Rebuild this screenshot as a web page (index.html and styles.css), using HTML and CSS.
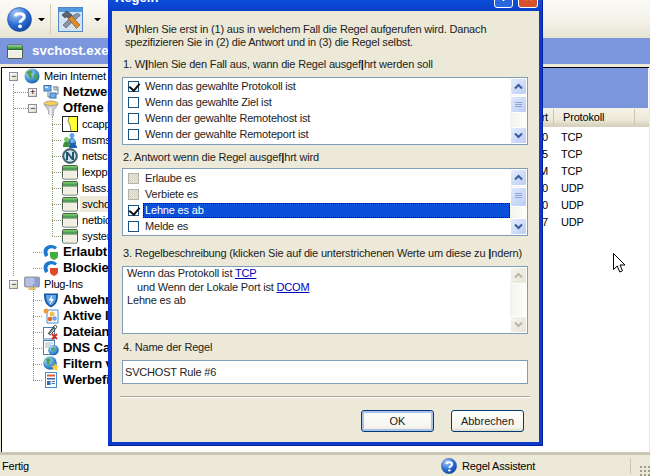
FILE: index.html
```html
<!DOCTYPE html>
<html lang="de">
<head>
<meta charset="utf-8">
<title>Regeln</title>
<link rel="stylesheet" href="styles.css">
</head>
<body>
<svg class="defs" width="0" height="0" aria-hidden="true">
  <defs>
    <linearGradient id="gw" x1="0" y1="0" x2="0" y2="1"><stop offset="0" stop-color="#8fd17c"/><stop offset="1" stop-color="#2f8f3a"/></linearGradient>
    <radialGradient id="gglobe" cx=".35" cy=".3" r=".8"><stop offset="0" stop-color="#bfe3fb"/><stop offset=".6" stop-color="#3d8fd6"/><stop offset="1" stop-color="#17509f"/></radialGradient>
    <radialGradient id="ghelp" cx=".35" cy=".25" r=".85"><stop offset="0" stop-color="#a9cdf7"/><stop offset=".55" stop-color="#2d6fd6"/><stop offset="1" stop-color="#123f9e"/></radialGradient>
    <symbol id="i-win" viewBox="0 0 16 16">
      <rect x=".5" y="1.5" width="15" height="13.5" rx="1.5" fill="#fff" stroke="#47604a"/>
      <rect x="1" y="2" width="14" height="3.5" fill="url(#gw)"/>
      <rect x="1" y="5.5" width="14" height="1" fill="#2a6a30"/>
      <rect x="1.5" y="7" width="13" height="7.5" fill="#f1efe2"/>
    </symbol>
    <symbol id="i-globe" viewBox="0 0 16 16">
      <circle cx="8" cy="8" r="7.5" fill="url(#gglobe)"/>
      <path d="M3 3.5 7 2l2 2-2 2 1 2-1 3-2-2-1-3-2-1zM10 7l3.500-1 1 3-2.500 3.500-1.500-1.500z" fill="#4fa24a"/>
    </symbol>
    <symbol id="i-net" viewBox="0 0 16 16">
      <path d="M10 3h5v7h-3" fill="none" stroke="#6b7f92"/>
      <path d="M5 8v5h6" fill="none" stroke="#6b7f92"/>
      <rect x="1" y="1.500" width="7" height="5.500" fill="#6ab0ea" stroke="#3f6ea8"/>
      <rect x="2" y="2.500" width="3" height="1.500" fill="#d8eeff"/>
      <rect x="7" y="9" width="6" height="5" fill="#6ab0ea" stroke="#3f6ea8"/>
      <rect x="11" y="3" width="3" height="3" fill="#cfd6dd" stroke="#8a97a5"/>
    </symbol>
    <symbol id="i-funnel" viewBox="0 0 16 16">
      <ellipse cx="8" cy="3.500" rx="7" ry="2.500" fill="#f7cf4b" stroke="#a9a9a9"/>
      <path d="M1 4c1 3 4 5 4.500 7v3l5 1.500V11C11 9 14 7 15 4c-2 2-12 2-14 0z" fill="#c9ccd2" stroke="#8b8e96" stroke-width=".6"/>
      <path d="M6.500 7.500v7l2 .7v-7.500z" fill="#f0f1f3"/>
    </symbol>
    <symbol id="i-yellow" viewBox="0 0 16 16">
      <rect x=".5" y=".5" width="15" height="15" fill="#ffff33" stroke="#222"/>
      <path d="M1 1h6L6 5l2 4 1 6H1z" fill="#fff"/>
      <path d="M7 1 6 5l2 4 1 6" fill="none" stroke="#8a8a50"/>
    </symbol>
    <symbol id="i-people" viewBox="0 0 16 16">
      <circle cx="10" cy="3.500" r="2.500" fill="#5fa7e0"/>
      <path d="M6 12c0-4 2-6 4-6s4 2 4 6z" fill="#2d6ab8"/>
      <circle cx="4.500" cy="7.500" r="2.500" fill="#7dc86d"/>
      <path d="M1 15c0-4 1.500-5.500 3.500-5.500S8 11 8 15z" fill="#3e8f3c"/>
      <circle cx="10.500" cy="9" r="2.300" fill="#6fb7ea"/>
      <path d="M7 16c0-3.500 1.500-5 3.500-5s4.500 1.500 4.500 5z" fill="#1f5fb0"/>
    </symbol>
    <symbol id="i-ns" viewBox="0 0 16 16">
      <circle cx="8" cy="8" r="7.500" fill="#2f5f6e" stroke="#6d7d85"/>
      <circle cx="8" cy="8" r="5.800" fill="#d7e4e6"/>
      <path d="M4 12V4h2l4 5V4h2v8h-2L6 7v5z" fill="#19586e"/>
    </symbol>
    <symbol id="i-allow" viewBox="0 0 16 16">
      <path d="M14 3.500C12 .5 6 0 2.500 3 -.5 6 .5 11 2.500 13l3-2C4 9 4 6.500 6 5s5-.5 6 .5z" fill="#1c78d0"/>
      <path d="M7 8h8v4c0 2-2 3-4 4-2-1-4-2-4-4z" fill="#3fae3a"/>
    </symbol>
    <symbol id="i-block" viewBox="0 0 16 16">
      <path d="M14 3.500C12 .5 6 0 2.500 3 -.5 6 .5 11 2.500 13l3-2C4 9 4 6.500 6 5s5-.5 6 .5z" fill="#1c78d0"/>
      <path d="M7 8h8v4c0 2-2 3-4 4-2-1-4-2-4-4z" fill="#e0482a"/>
    </symbol>
    <symbol id="i-plug" viewBox="0 0 16 16">
      <rect x=".5" y="1" width="15" height="10" rx="1" fill="#8f9fd0" stroke="#9c9c9c"/>
      <rect x="1.500" y="2" width="9" height="8" fill="#b5c0e4"/>
      <path d="M5 11h6l1 3H4z" fill="#e3c26a"/>
    </symbol>
    <symbol id="i-shield" viewBox="0 0 16 16">
      <path d="M1 1.500h14c0 7-1 11-7 14C2 12.500 1 8.500 1 1.500z" fill="#1559a8"/>
      <path d="M3 3h10c0 5-1 8-5 10.500C4 11 3 8 3 3z" fill="#63a5e6"/>
      <path d="M9.500 3 5.500 8.500H8L6.500 13l4.500-6H8.500z" fill="#fff"/>
    </symbol>
    <symbol id="i-active" viewBox="0 0 16 16">
      <path d="M4 2h11v13H4z" fill="#fff" stroke="#3f8fd8"/>
      <circle cx="3" cy="3" r="2.500" fill="#f09a3a"/>
      <circle cx="9" cy="6" r="2.500" fill="#f3c04a"/>
      <circle cx="7" cy="11" r="2.300" fill="#e0672c"/>
      <circle cx="11.500" cy="10.500" r="2.300" fill="#6fa8dc"/>
    </symbol>
    <symbol id="i-attach" viewBox="0 0 16 16">
      <rect x=".5" y="3.500" width="11" height="11.500" fill="#fff" stroke="#4b7fb8"/>
      <path d="M5 10 11 2c1.500-1.500 3.500 0 2.500 1.500L8 10.500c-1 1-2.200 0-1.500-1L11 4" fill="none" stroke="#333"/>
      <path d="m9 10 5 5m0-5-5 5" stroke="#d8281c" stroke-width="1.800"/>
    </symbol>
    <symbol id="i-dns" viewBox="0 0 16 16">
      <rect x=".5" y=".5" width="11" height="14" fill="#fff" stroke="#4b7fb8"/>
      <path d="M2 3h8M2 5h6M2 7h4" stroke="#9fb6cf"/>
      <circle cx="10.500" cy="10" r="5.300" fill="url(#gglobe)"/>
      <path d="M8 8l3-1 1 2-2 3-2-2z" fill="#5aa652"/>
    </symbol>
    <symbol id="i-filter" viewBox="0 0 16 16">
      <circle cx="7" cy="7" r="6.800" fill="url(#gglobe)"/>
      <path d="M3 3l3-1 2 2-2 3 1 3-3-2z" fill="#4fa24a"/>
      <path d="m12 7 1.200 2.800 2.800.3-2.100 1.900.6 3-2.500-1.500L9.500 15l.6-3L8 10.100l2.800-.3z" fill="#f4d03f"/>
    </symbol>
    <symbol id="i-ad" viewBox="0 0 16 16">
      <rect x="2.500" y=".5" width="11" height="15" fill="#fff" stroke="#3f8fd8"/>
      <rect x="4" y="2.500" width="8" height="2" fill="#e05d3c"/>
      <rect x="4" y="6" width="8" height="1.500" fill="#3a5fb0"/>
      <rect x="4" y="9" width="3.500" height="4" fill="#2e6fc4"/>
      <path d="M8.500 9.500H12M8.500 11.500H12" stroke="#5b6f8f"/>
    </symbol>
    <symbol id="i-help" viewBox="0 0 24 24">
      <circle cx="12" cy="12" r="11.500" fill="url(#ghelp)" stroke="#1d4f9e" stroke-width=".6"/>
      <path d="M8 9c.5-3.500 8.500-3.500 8.500.5 0 3-4 3-4 5.500" fill="none" stroke="#fff" stroke-width="3"/>
      <circle cx="12.500" cy="18.500" r="1.800" fill="#fff"/>
    </symbol>
    <symbol id="i-up" viewBox="0 0 9 7"><path d="M1 5.500 4.500 2 8 5.500" fill="none" stroke="currentColor" stroke-width="2"/></symbol>
    <symbol id="i-down" viewBox="0 0 9 7"><path d="M1 1.500 4.500 5 8 1.500" fill="none" stroke="currentColor" stroke-width="2"/></symbol>
  </defs>
</svg>

<div class="app">
  <header class="toolbar">
    <svg class="tb-help"><use href="#i-help"/></svg>
    <span class="caret"></span>
    <span class="tb-sep"></span>
    <span class="tb-tools">
      <svg viewBox="0 0 25 25" width="25" height="25">
        <rect x=".5" y=".5" width="24" height="24" fill="#d3e3f5" stroke="#4f86c4"/>
        <rect x="1" y="1" width="23" height="4" fill="#4f9be0"/>
        <path d="M18 7c2-1.500 4 0 4 2l-2 .5-1 2-1.500.5L8 21l-3-3 9-9z" fill="#8a95a3" stroke="#4c5560" stroke-width=".6"/>
        <path d="m9 10 3-3 10 11-3.500 3.500z" fill="#e08a2a" stroke="#7a4a12" stroke-width=".6"/>
        <path d="m4 8 5-4 5 4-3 3-2-1.500-2 1.500z" fill="#5a6672" stroke="#2e343b" stroke-width=".6"/>
      </svg>
    </span>
    <span class="caret caret-2"></span>
  </header>

  <div class="band">
    <svg class="band-icon"><use href="#i-win"/></svg>
    <span class="band-title">svchost.exe</span>
  </div>

  <main class="panes">
    <nav class="tree">
      <div class="node root"><span class="exp">−</span><svg class="ic"><use href="#i-globe"/></svg><span>Mein Internet</span></div>
      <div class="branch b-root">
        <div class="node l1"><span class="exp">+</span><svg class="ic"><use href="#i-net"/></svg><b>Netzwerk</b></div>
        <div class="node l1"><span class="exp">−</span><svg class="ic"><use href="#i-funnel"/></svg><b>Offene Ports</b></div>
        <div class="branch b-one">
          <div class="node l2"><svg class="ic"><use href="#i-yellow"/></svg><span>ccapp.exe</span></div>
          <div class="node l2"><svg class="ic"><use href="#i-people"/></svg><span>msmsgs.exe</span></div>
          <div class="node l2"><svg class="ic"><use href="#i-ns"/></svg><span>netscape.exe</span></div>
          <div class="node l2"><svg class="ic"><use href="#i-win"/></svg><span>lexpps.exe</span></div>
          <div class="node l2"><svg class="ic"><use href="#i-win"/></svg><span>lsass.exe</span></div>
          <div class="node l2"><svg class="ic"><use href="#i-win"/></svg><span class="sel">svchost.exe</span></div>
          <div class="node l2"><svg class="ic"><use href="#i-win"/></svg><span>netbios</span></div>
          <div class="node l2"><svg class="ic"><use href="#i-win"/></svg><span>system</span></div>
        </div>
        <div class="node l1 leaf"><svg class="ic"><use href="#i-allow"/></svg><b>Erlaubt</b></div>
        <div class="node l1 leaf"><svg class="ic"><use href="#i-block"/></svg><b>Blockiert</b></div>
      </div>
      <div class="node root"><span class="exp">−</span><svg class="ic"><use href="#i-plug"/></svg><span>Plug-Ins</span></div>
      <div class="branch b-plug">
        <div class="node l1 leaf"><svg class="ic"><use href="#i-shield"/></svg><b>Abwehr</b></div>
        <div class="node l1 leaf"><svg class="ic"><use href="#i-active"/></svg><b>Aktive Inhalte</b></div>
        <div class="node l1 leaf"><svg class="ic"><use href="#i-attach"/></svg><b>Dateianhänge</b></div>
        <div class="node l1 leaf"><svg class="ic"><use href="#i-dns"/></svg><b>DNS Cache</b></div>
        <div class="node l1 leaf"><svg class="ic"><use href="#i-filter"/></svg><b>Filtern von</b></div>
        <div class="node l1 leaf"><svg class="ic"><use href="#i-ad"/></svg><b>Werbefilter</b></div>
      </div>
    </nav>
    <section class="list">
      <div class="list-head"></div>
      <div class="cols"><span class="c-port">Port</span><span class="c-proto">Protokoll</span></div>
      <div class="row"><span class="c-port">80</span><span class="c-proto">TCP</span></div>
      <div class="row"><span class="c-port">135</span><span class="c-proto">TCP</span></div>
      <div class="row"><span class="c-port">DCOM</span><span class="c-proto">TCP</span></div>
      <div class="row"><span class="c-port">500</span><span class="c-proto">UDP</span></div>
      <div class="row"><span class="c-port">1030</span><span class="c-proto">UDP</span></div>
      <div class="row"><span class="c-port">1027</span><span class="c-proto">UDP</span></div>
    </section>
  </main>

  <footer class="status">
    <span class="st-text">Fertig</span>
    <svg class="st-help"><use href="#i-help"/></svg>
    <span class="st-rule">Regel Assistent</span>
    <span class="st-sep"></span>
    <span class="grip"></span>
  </footer>
</div>

<div class="dialog">
  <div class="titlebar">
    <span class="title">Regeln</span>
    <span class="tbtn tbtn-help">?</span>
    <span class="tbtn tbtn-close">✕</span>
  </div>
  <div class="body">
    <p class="intro">W<b class="glitch">|</b>hlen Sie erst in (1) aus in welchem Fall die Regel aufgerufen wird. Danach<br>spezifizieren Sie in (2) die Antwort und in (3) die Regel selbst.</p>

    <div class="label l-first">1. W<b class="glitch">|</b>hlen Sie den Fall aus, wann die Regel ausgef<b class="glitch">|</b>hrt werden soll</div>
    <div class="box">
      <div class="items">
        <div class="item"><span class="cb on"></span><span>Wenn das gewahlte Protokoll ist</span></div>
        <div class="item"><span class="cb"></span><span>Wenn das gewahlte Ziel ist</span></div>
        <div class="item"><span class="cb"></span><span>Wenn der gewahlte Remotehost ist</span></div>
        <div class="item"><span class="cb"></span><span>Wenn der gewahlte Remoteport ist</span></div>
      </div>
      <div class="sb">
        <span class="sb-btn"><svg><use href="#i-up"/></svg></span>
        <span class="sb-thumb"></span>
        <span class="sb-track"></span>
        <span class="sb-btn"><svg><use href="#i-down"/></svg></span>
      </div>
    </div>

    <div class="label l-two">2. Antwort wenn die Regel ausgef<b class="glitch">|</b>hrt wird</div>
    <div class="box">
      <div class="items items-two">
        <div class="item"><span class="cb dis"></span><span>Erlaube es</span></div>
        <div class="item"><span class="cb dis"></span><span>Verbiete es</span></div>
        <div class="item"><span class="cb on"></span><span class="hl">Lehne es ab</span></div>
        <div class="item"><span class="cb"></span><span>Melde es</span></div>
      </div>
      <div class="sb">
        <span class="sb-btn"><svg><use href="#i-up"/></svg></span>
        <span class="sb-thumb sb-thumb-tall"></span>
        <span class="sb-track"></span>
        <span class="sb-btn"><svg><use href="#i-down"/></svg></span>
      </div>
    </div>

    <div class="label l-three">3. Regelbeschreibung (klicken Sie auf die unterstrichenen Werte um diese zu <b class="glitch">|</b>ndern)</div>
    <div class="box">
      <div class="desc">
        <div>Wenn das Protokoll ist <a href="#">TCP</a></div>
        <div class="indent">und Wenn der Lokale Port ist <a href="#">DCOM</a></div>
        <div>Lehne es ab</div>
      </div>
      <div class="sb sb-off">
        <span class="sb-btn"><svg><use href="#i-up"/></svg></span>
        <span class="sb-track"></span>
        <span class="sb-btn"><svg><use href="#i-down"/></svg></span>
      </div>
    </div>

    <div class="label l-four">4. Name der Regel</div>
    <div class="input">SVCHOST Rule #6</div>
    <hr class="rule">
    <div class="actions">
      <button class="btn btn-def" type="button">OK</button>
      <button class="btn" type="button">Abbrechen</button>
    </div>
  </div>
</div>

<svg class="cursor" viewBox="0 0 13 21" width="13" height="21">
  <path d="M.5.500v16l3.800-3.500 2.400 6 2.800-1.200-2.500-5.800h5z" fill="#fff" stroke="#000"/>
</svg>
</body>
</html>
```
FILE: styles.css
```css
* { box-sizing: border-box; }
html, body { margin: 0; padding: 0; }
body {
  position: relative;
  width: 650px;
  height: 476px;
  overflow: hidden;
  font: 11px/16px "Liberation Sans", Arial, sans-serif;
  letter-spacing: -.18px;
  color: #000;
  background: #ece9d8;
}
.defs { position: absolute; }
svg { display: block; }

.app { display: flex; flex-direction: column; height: 476px; }

/* toolbar */
.toolbar {
  flex: 0 0 38px;
  display: flex;
  align-items: center;
  padding: 0 0 0 7px;
  background: linear-gradient(#fbfaf6, #f3f1e6 60%, #e6e3d2);
}
.tb-help { width: 25px; height: 25px; }
.caret { height: 0; width: 7px; margin-left: 6px; border: 3px solid transparent; border-top: 3px solid #000; border-bottom: 0; }
.tb-sep { width: 1px; height: 30px; margin-left: 5px; background: #cfccb8; }
.tb-tools { margin-left: 7px; }
.tb-tools svg { width: 25px; height: 25px; }
.caret-2 { margin-left: 11px; }

.band {
  flex: 0 0 26px;
  display: flex;
  align-items: center;
  padding-left: 7px;
  background: #7b96dc;
}
.band-icon { width: 16px; height: 17px; }
.band-title { margin-left: 9px; font: bold 13.4px/16px "Liberation Sans", sans-serif; color: #fff; letter-spacing: 0; }

/* panes */
.panes {
  flex: 1;
  display: flex;
  margin: 3px 1px 0 1px;
  border-top: 1px solid #000;
  border-left: 1px solid #000;
  background: #fff;
  min-height: 0;
}
.tree { flex: 0 0 300px; }
.tree b { font-size: 13px; letter-spacing: -.1px; }
.node {
  position: relative;
  display: flex;
  align-items: center;
  height: 16px;
  white-space: nowrap;
}
.root { padding-left: 7px; }
.root .ic { margin-left: 6px; }
.root > span:last-child { margin-left: 4px; }
.l1 { padding-left: 26px; }
.l1 .ic { margin-left: 6px; }
.l1 b { margin-left: 4px; }
.l1.leaf { padding-left: 41px; }
.l1.leaf .ic { margin-left: 0; }
.l2 { padding-left: 60px; }
.l2 span { margin-left: 2px; padding: 0 2px; }
.ic { width: 16px; height: 16px; flex: none; position: relative; }
.exp {
  flex: none;
  width: 9px;
  height: 9px;
  border: 1px solid #8a8f9a;
  background: linear-gradient(135deg, #fff, #dcd8c8);
  font: 9px/7px "Liberation Sans", sans-serif;
  text-align: center;
  color: #000;
  position: relative;
}
.sel { background: #ece9d8; }

.branch { position: relative; }
.branch::before {
  content: "";
  position: absolute;
  border-left: 1px dotted #8a9a70;
}
.b-root::before { left: 11px; top: 0; bottom: 0; }
.b-plug::before { left: 31px; top: -8px; bottom: 8px; }
.b-one::before { left: 50px; top: 0; bottom: 8px; }
.b-root > .node::before, .b-plug > .node::before, .b-one > .node::before {
  content: "";
  position: absolute;
  top: 8px;
  border-top: 1px dotted #8a9a70;
}
.b-root > .node::before { left: 12px; width: 14px; }
.b-root > .leaf::before { left: 31px; width: 9px; }
.b-plug > .node::before { left: 31px; width: 9px; }
.b-one > .node::before { left: 50px; width: 9px; }

/* list */
.list { flex: 1; display: flex; flex-direction: column; min-width: 0; }
.list-head { flex: 0 0 40px; background: #7b96dc; margin-right: 1px; }
.cols {
  flex: 0 0 19px;
  display: flex;
  align-items: center;
  margin-bottom: 1px;
  background: linear-gradient(#f5f3e8, #ece9d8 70%, #d8d4c0);
  border-bottom: 2px solid #d6d2bd;
}
.row { flex: 0 0 17px; display: flex; align-items: center; }
.c-port { width: 246px; text-align: right; }
.c-proto { margin-left: 13px; }
.cols .c-port { width: 252px; padding-right: 5px; border-right: 1px solid #c9c6b2; }
.cols .c-proto { width: 81px; margin-left: 0; padding-left: 9px; border-right: 1px solid #c9c6b2; }

/* status */
.status {
  flex: 0 0 24px;
  display: flex;
  align-items: center;
  border-top: 3px solid #c9c6b4;
  background: #ece9d8;
  padding-left: 2px;
}
.st-text { flex: 0 0 439px; }
.st-help { width: 16px; height: 16px; }
.st-rule { margin-left: 5px; flex: 0 0 168px; }
.st-sep { width: 1px; height: 16px; background: #c9c6b2; }
.grip {
  margin-left: auto;
  width: 11px;
  height: 11px;
  align-self: flex-end;
  background: radial-gradient(circle, #a09c88 1px, transparent 1.2px) 0 0/4px 4px;
}

/* dialog: a window over the app */
.dialog {
  position: absolute;
  left: 108px;
  top: -19px;
  width: 435px;
  height: 465px;
  background: #0b3cc8;
  padding: 0 3px 3px;
  display: flex;
  flex-direction: column;
  border-left: 1px solid #0831d9;
  border-right: 1px solid #001ea0;
  border-bottom: 1px solid #001ea0;
}
.titlebar {
  position: relative;
  flex: 0 0 30px;
  margin: 0 -3px;
  background: linear-gradient(#0a5ee6, #0a55e0 50%, #0a3fc8);
  display: flex;
  align-items: flex-end;
  padding: 0 4px 3px 6px;
}
.title { font: bold 13px/16px "Liberation Sans", sans-serif; color: #fff; letter-spacing: 0; flex: 1; margin-bottom: 2px; }
.tbtn {
  width: 20px;
  height: 20px;
  border: 1px solid #fff;
  border-radius: 3px;
  color: #fff;
  font: bold 11px/16px "Liberation Sans", sans-serif;
  text-align: center;
}
.tbtn-help { width: 19px; background: #2a66e0; }
.tbtn-close { background: #d9512c; margin-left: 5px; }
.body { flex: 1; background: #ece9d8; padding: 12px 11px 0 10px; color: #222; }
.intro { margin: 0; padding-left: 3px; line-height: 13px; white-space: nowrap; }
.glitch { font-weight: 900; font-size: 11px; letter-spacing: -1px; margin: 0 1px 0 0; color: #111; }
.label { padding-left: 1px; line-height: 14px; white-space: nowrap; }
.l-first { margin-top: 8px; margin-bottom: 6px; }
.l-two { margin-top: 5px; margin-bottom: 4px; }
.l-three { margin-top: 10px; margin-bottom: 6px; }
.l-four { margin-top: 6px; margin-bottom: 6px; }
.box {
  display: flex;
  height: 68px;
  border: 1px solid #7f9db9;
  background: #fff;
}
.items { flex: 1; padding: 0 0 0 5px; min-width: 0; }
.items-two { padding-top: 1px; }
.item { display: flex; align-items: center; height: 16px; white-space: nowrap; }
.item > span:last-child { margin-left: 4px; padding: 0 2px; }
.cb { flex: none; width: 11px; height: 11px; border: 1px solid #1c5180; background: #fff; position: relative; }
.cb.on::after {
  content: "";
  position: absolute;
  left: 2px;
  top: -1px;
  width: 5px;
  height: 8px;
  border: solid #111;
  border-width: 0 2px 2px 0;
  transform: rotate(40deg);
}
.cb.dis { border-color: #b5b3a6; background: repeating-conic-gradient(#cfcdc0 0 25%, #efeee6 0 50%) 0 0/2px 2px; }
.item .hl {
  flex: 1;
  height: 15px;
  line-height: 15px;
  background: #0a50d8;
  color: #fff;
  outline: 1px dotted #111;
  outline-offset: -1px;
}
.sb { flex: 0 0 17px; display: flex; flex-direction: column; background: linear-gradient(90deg, #f3f2ea, #fefefb); }
.sb-btn {
  flex: 0 0 17px;
  display: flex;
  align-items: center;
  justify-content: center;
  border: 1px solid #fff;
  border-radius: 2px;
  background: linear-gradient(135deg, #e4ecfd, #bccdf5);
  color: #3a5a9c;
}
.sb-btn svg { width: 9px; height: 7px; }
.sb-thumb {
  flex: 0 0 17px;
  margin-top: 1px;
  border: 1px solid #fff;
  border-radius: 2px;
  background:
    linear-gradient(#8ca4d8, #8ca4d8) center 5px/7px 1px no-repeat,
    linear-gradient(#8ca4d8, #8ca4d8) center 7px/7px 1px no-repeat,
    linear-gradient(#8ca4d8, #8ca4d8) center 9px/7px 1px no-repeat,
    linear-gradient(135deg, #dfe8fc, #bccdf5);
}
.sb-thumb-tall { flex-basis: 20px; }
.sb-track { flex: 1; }
.sb-off .sb-btn { background: linear-gradient(135deg, #f4f3ea, #e6e4d8); color: #b8b6a8; }
.desc { flex: 1; padding: 0 4px; line-height: 13.5px; }
.indent { padding-left: 10px; }
.desc a { color: #0000c0; }
.input {
  height: 24px;
  border: 1px solid #7f9db9;
  background: #fff;
  padding-left: 2px;
  line-height: 22px;
}
.rule { margin: 12px -2px 0; height: 2px; border: 0; border-top: 1px solid #aca899; border-bottom: 1px solid #fff; }
.actions { display: flex; justify-content: flex-end; gap: 17px; margin-top: 12px; padding-right: 4px; }
.btn {
  width: 73px;
  height: 22px;
  padding: 0;
  border: 1px solid #003c74;
  border-radius: 3px;
  background: linear-gradient(#fff, #f4f3ea 85%, #dcd8c8);
  font: 11px/16px "Liberation Sans", sans-serif;
  color: #222;
}
.btn-def { box-shadow: inset 0 0 0 2px #a9c2ec; }

.cursor { position: absolute; left: 613px; top: 253px; }
```
